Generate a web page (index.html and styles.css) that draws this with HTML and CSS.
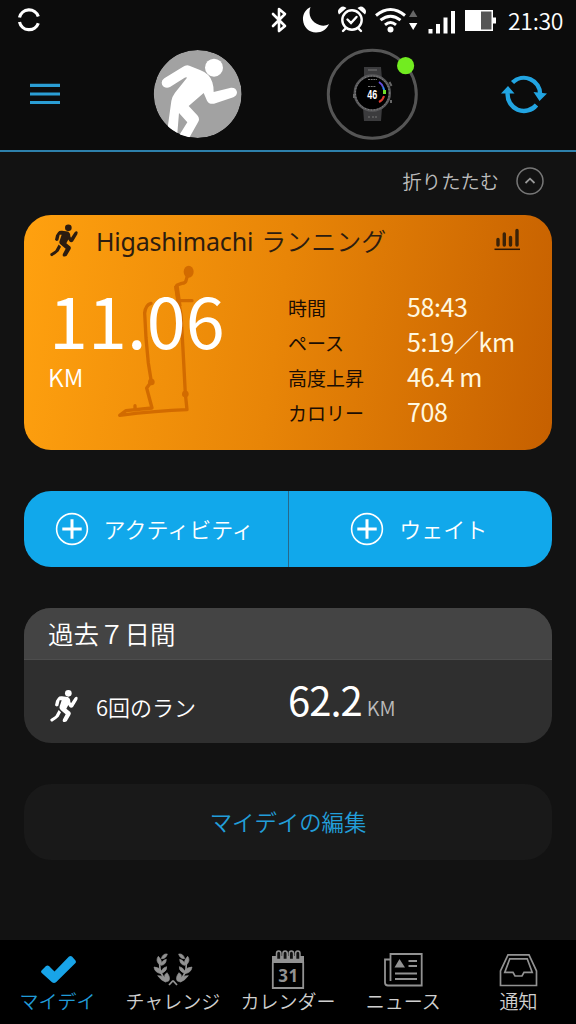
FILE: index.html
```html
<!DOCTYPE html>
<html lang="ja">
<head>
    <meta charset="UTF-8">
    <meta name="viewport" content="width=device-width, initial-scale=1.0">
    <title>マイデイ</title>
    <link rel="stylesheet" href="styles.css">
</head>
<body>
    <svg class="defs" width="0" height="0">
        <symbol id="runner" viewBox="92 42 84 98">
            <circle cx="147" cy="53" r="10" fill="currentColor"/>
            <path d="M116 66 Q120 61 128 62 L145 64 Q153 67 153 78 L155 83 L166 66 Q172 61 175 66 L174 72 L161 94 Q155 99 150 93 L147 88 L141 99 L153 109 Q156 113 153 118 L142 137 Q137 141 131 138 Q129 135 131 131 L139 116 L124 103 Q118 99 121 92 L127 74 L121 74 L117 90 Q111 95 107 89 L110 75 Z M118 103 L125 110 L118 123 Q110 131 98 138 Q92 138 93 131 L108 121 Z" fill="currentColor"/>
        </symbol>
        <symbol id="plus" viewBox="0 0 34 34">
            <circle cx="17" cy="17" r="15.4" fill="none" stroke="currentColor" stroke-width="1.6"/>
            <path d="M17 7.3v19.4M7.3 17h19.4" stroke="currentColor" stroke-width="3"/>
        </symbol>
    </svg>

    <header class="header">
        <div class="status">
            <svg class="status-ring" width="24" height="40" viewBox="17 0 24 40">
                <path d="M19.5 17.5a9.8 9.8 0 0 1 18.8-1M19.5 22a9.8 9.8 0 0 0 18.8 1.2" fill="none" stroke="#fff" stroke-width="3.2"/>
            </svg>
            <svg width="32" height="40" viewBox="264 0 32 40">
                <path d="M273 14l12 12-6 5V9l6 5-12 12" fill="none" stroke="#fff" stroke-width="2.6" stroke-linejoin="round" stroke-linecap="round"/>
            </svg>
            <svg width="38" height="40" viewBox="296 0 38 40">
                <path d="M310.500 7c-4.500 2-8 7-7.500 13 .5 7 6 12.500 13 12.500 6 0 11-3.500 13-8.500-3 2-6.500 2-9.500 1-8-2.500-12-10-9-18z" fill="#fff"/>
            </svg>
            <svg width="36" height="40" viewBox="334 0 36 40">
                <g fill="none" stroke="#fff" stroke-width="2.4" stroke-linecap="round">
                    <circle cx="352" cy="20" r="9.700"/>
                    <path d="M347.500 19.500l3.500 3.500 5.500-6M345.500 28.500l-2.500 2.500M358.500 28.500l2.500 2.500"/>
                </g>
                <path d="M339 14.500a5 5 0 0 1 7.500-6.500zM365 14.500a5 5 0 0 0-7.500-6.500z" fill="#fff"/>
            </svg>
            <svg width="52" height="40" viewBox="370 0 52 40">
                <g fill="none" stroke="#fff" stroke-width="3">
                    <path d="M376 15.500q14.500-12 29 0M380.500 20.200q10-8 20 0M385 24.800q5.500-4.500 11 0"/>
                </g>
                <circle cx="390.500" cy="29.500" r="3" fill="#fff"/>
                <path d="M409 17l4.200-7 4.200 7z" fill="#666"/>
                <path d="M409 23l4.200 7 4.200-7z" fill="#fff"/>
            </svg>
            <svg width="38" height="40" viewBox="422 0 38 40">
                <path d="M428.500 29h4v4.500h-4zM436 24h4v9.500h-4zM443.500 17.500h4v16h-4zM451 11h4v22.500h-4z" fill="#fff"/>
            </svg>
            <svg width="48" height="40" viewBox="460 0 48 40">
                <path d="M465 10h28v7.500h3v6h-3V31h-28z" fill="#fff"/>
                <path d="M481 11.500h10.500v18H481z" fill="#555"/>
            </svg>
            <span class="clock">21:30</span>
        </div>
        <div class="toolbar">
            <svg width="32" height="24" viewBox="29 82 32 24">
                <path d="M30 85.300h30M30 94h30M30 102.500h30" stroke="#2b9ed4" stroke-width="3.200"/>
            </svg>
            <svg class="avatar" width="90" height="90" viewBox="9 12 270 270">
                <clipPath id="round"><circle cx="143" cy="147" r="132"/></clipPath>
                <g clip-path="url(#round)">
                    <circle cx="143" cy="147" r="132" fill="#a2a2a2"/>
                    <circle cx="192" cy="68" r="27" fill="#fff"/>
                    <path d="M35 113Q35 105 43 100L98 66Q108 59 118 62L150 75Q180 86 187 112Q191 124 191 141L243 128Q258 127 261 141Q261 152 250 157L192 176Q178 179 171 167L161 144L116 183L142 211Q151 221 144 232L114 285L88 270L112 232L87 204L82 265L52 255L64 168Q66 155 75 143L111 98Q109 95 104 98L60 126Q50 131 41 125Q35 120 35 113Z" fill="#fff"/>
                </g>
            </svg>
            <svg class="device" width="94" height="94" viewBox="325 47 94 94">
                <circle cx="372.300" cy="94.300" r="44" fill="#0a0a0a" stroke="#555" stroke-width="3"/>
                <path d="M364 67h17l1 12h-18zM363 108h19l-1 13h-17z" fill="#3b3b3d"/>
                <path d="M368 70h9M368 117h2M372 117h2M375 117h2" stroke="#777" stroke-width="1"/>
                <circle cx="372.300" cy="93" r="17.500" fill="#000" stroke="#58585a" stroke-width="2.500"/>
                <circle cx="372.300" cy="93" r="17" fill="none" stroke="#8a8a8a" stroke-width="1" stroke-dasharray="1 2"/>
                <path d="M354 94v4M389.500 82l2 4M391 100v3" stroke="#666" stroke-width="2"/>
                <path d="M379 82q3 2 4 5" fill="none" stroke="#6350dc" stroke-width="2"/>
                <path d="M383 87q1 2 1.500 5" fill="none" stroke="#3287ea" stroke-width="2"/>
                <path d="M384.500 90v4" stroke="#71dd2a" stroke-width="3"/>
                <path d="M384 96q-1 4-5 6" fill="none" stroke="#df3b30" stroke-width="2"/>
                <path d="M368 79.500h9M368 86.500h8" stroke="#777" stroke-width="1" stroke-dasharray="2 .7"/>
                <text class="watch-value" x="372.300" y="99" text-anchor="middle" textLength="10" lengthAdjust="spacingAndGlyphs">46</text>
                <circle cx="405.600" cy="65.700" r="8.600" fill="#72ec20"/>
            </svg>
            <svg class="sync" width="48" height="42" viewBox="500 73 48 42">
                <g fill="none" stroke="#22a5e2" stroke-width="4.400">
                    <path d="M512.500 82.500a16.300 16.300 0 0 1 27.700 12"/>
                    <path d="M536.500 105a16.300 16.300 0 0 1-28.800-12"/>
                </g>
                <path d="M533.500 92l13.500 1.500-7.500 7.500zM501 93.500l7-7.500 6.500 7.500z" fill="#22a5e2"/>
            </svg>
        </div>
    </header>

    <main class="content">
        <div class="collapse">
            <span>折りたたむ</span>
            <svg width="28" height="28" viewBox="0 0 28 28">
                <circle cx="14" cy="14" r="13" fill="none" stroke="#777" stroke-width="1.500"/>
                <path d="M9.500 16l4.500-4.300 4.500 4.300" fill="none" stroke="#999" stroke-width="1.800"/>
            </svg>
        </div>

        <section class="run-card">
            <svg class="route" width="84" height="160" viewBox="288 160 252 480">
                <path d="M506 185L498 213Q497 220 485 221L472 226Q467 229 469 240L475 272L516 273M475 272L483 315L489 420L496 552L501 600Q410 603 299 617L318 603L396 595L380 535L394 516L385 460L378 385L374 310Q377 285 393 281M345 600V588" fill="none" stroke="#d26b00" stroke-width="10" stroke-linejoin="round" stroke-linecap="round"/>
                <path d="M469 228L478 290" stroke="#d26b00" stroke-width="14"/>
                <ellipse cx="506" cy="186" rx="15" ry="18" fill="#d26b00"/>
                <circle cx="394" cy="517" r="10" fill="#d26b00"/>
                <circle cx="496" cy="553" r="10" fill="#d26b00"/>
            </svg>
            <div class="run-title">
                <svg class="runner" width="28" height="33"><use href="#runner"/></svg>
                <h2><span class="place">Higashimachi</span>ランニング</h2>
                <svg class="chart" width="28" height="24" viewBox="494 229 28 24">
                    <path d="M498 246v-5.500M504.300 246v-11M510.500 246v-7.500M517 246v-14.500" stroke="#3a2208" stroke-width="3.400" stroke-linecap="round"/>
                    <path d="M494.500 250.300H520" stroke="#2b1604" stroke-width="1.500"/>
                </svg>
            </div>
            <div class="run-body">
                <div class="distance">
                    <div class="distance-value">11.06</div>
                    <div class="distance-unit">KM</div>
                </div>
                <dl class="stats">
                    <dt>時間</dt><dd>58:43</dd>
                    <dt>ペース</dt><dd>5:19／km</dd>
                    <dt>高度上昇</dt><dd>46.4 m</dd>
                    <dt>カロリー</dt><dd>708</dd>
                </dl>
            </div>
        </section>

        <div class="actions">
            <button class="action">
                <svg width="34" height="34"><use href="#plus"/></svg>
                <span>アクティビティ</span>
            </button>
            <button class="action">
                <svg width="34" height="34"><use href="#plus"/></svg>
                <span>ウェイト</span>
            </button>
        </div>

        <section class="week-card">
            <h2 class="week-title">過去７日間</h2>
            <div class="week-row">
                <svg class="runner" width="28" height="34"><use href="#runner"/></svg>
                <span class="week-label">6回のラン</span>
                <span class="week-value">62.2</span>
                <span class="week-unit">KM</span>
            </div>
        </section>

        <button class="edit">マイデイの編集</button>
    </main>

    <nav class="tabs">
        <a class="tab active">
            <svg width="40" height="40" viewBox="38 950 40 40">
                <path d="M41.500 970.500l4.500-4.500q1.500-1 3 0l5.500 5.500 14.500-15q1.500-1.200 3 0l3.500 4q1 1.500 0 2.500l-19.500 19.200q-2 1.500-4 0l-10.500-9.500q-1-1 0-2.200z" fill="#18a4e8"/>
            </svg>
            <span>マイデイ</span>
        </a>
        <a class="tab">
            <svg width="40" height="40" viewBox="9 15 120 120">
                <g id="branch">
                    <path d="M52 27Q38 25 34 41Q48 42 52 27ZM25 34Q16 46 27 58L33 59Q38 48 25 34ZM49 43Q34 47 33 61Q48 60 49 43ZM12 66Q14 83 33 86L41 82Q51 76 50 65Q40 67 34 77Q27 67 12 66ZM23 92Q33 106 46 111L56 108Q63 98 51 83Q42 88 44 98Q35 91 23 92Z" fill="#929292" stroke="#929292" stroke-width="2"/>
                    <path d="M29 56Q28 88 50 106M57 120L69 107" fill="none" stroke="#929292" stroke-width="5"/>
                </g>
                <use href="#branch" transform="translate(138 0) scale(-1 1)"/>
            </svg>
            <span>チャレンジ</span>
        </a>
        <a class="tab">
            <svg width="40" height="40" viewBox="268 950 40 40">
                <path d="M272.800 962.500V988h30.400v-26" fill="none" stroke="#929292" stroke-width="1.800"/>
                <path d="M272 956h32v7h-32z" fill="#929292"/>
                <path d="M276.500 959.500v-6q0-2.500 2.200-2.500t2.200 2.500v6zM282.900 959.500v-6q0-2.500 2.200-2.500t2.200 2.500v6zM289.200 959.500v-6q0-2.500 2.200-2.500t2.200 2.500v6zM295.600 959.500v-6q0-2.500 2.200-2.500t2.200 2.500v6z" fill="#111" stroke="#929292" stroke-width="1.500"/>
                <text class="cal-day" x="288.200" y="981.500" text-anchor="middle" textLength="20">31</text>
            </svg>
            <span>カレンダー</span>
        </a>
        <a class="tab">
            <svg width="40" height="40" viewBox="383 950 40 40">
                <g fill="none" stroke="#929292" stroke-width="1.800">
                    <path d="M390.500 981v-27h31.200v31.500H388q-3 0-3-3V959.500h5.500"/>
                    <path d="M408.500 961h8.500M408.500 966h8.500M395 973.500h22M395 979h22"/>
                </g>
                <path d="M394.500 967.500l5-8.500 5.500 8.500z" fill="#929292"/>
            </svg>
            <span>ニュース</span>
        </a>
        <a class="tab">
            <svg width="40" height="40" viewBox="498 950 40 40">
                <path d="M500.500 985.500V971l7.500-16.200h21l7.500 16.200v14.500zM504.800 972.300l5-13.500h17.400l5 13.500H524l-2 3.700h-7l-2-3.700z" fill="none" stroke="#929292" stroke-width="1.700"/>
            </svg>
            <span>通知</span>
        </a>
    </nav>
</body>
</html>
```

FILE: styles.css
```css
* {
    box-sizing: border-box;
}

body {
    margin: 0;
    height: 1024px;
    display: flex;
    flex-direction: column;
    background: #121212;
    color: #fff;
    font-family: "Noto Sans CJK JP", "Noto Sans", sans-serif;
    font-weight: 350;
    overflow: hidden;
}

svg {
    display: block;
    flex-shrink: 0;
}

.defs {
    position: absolute;
}

h2, dl, dd {
    margin: 0;
    font-weight: inherit;
}

button {
    border: 0;
    padding: 0;
    font-family: inherit;
    font-weight: inherit;
    color: inherit;
}

/* header */
.header {
    height: 152px;
    background: #0c0c0c;
    border-bottom: 2px solid #2d80ab;
}

.status {
    display: flex;
    height: 40px;
    padding-left: 17px;
}

.status-ring {
    margin-right: 223px;
}

.clock {
    font-size: 23px;
    line-height: 41px;
    letter-spacing: -0.3px;
}

.toolbar {
    display: flex;
    align-items: center;
    height: 108px;
    padding-left: 29px;
}

.avatar {
    margin-left: 92px;
}

.device {
    margin-left: 82px;
}

.sync {
    margin-left: 81px;
}

.watch-value {
    font: bold 12px "Liberation Sans", sans-serif;
    fill: #fff;
}

/* cards */
.content {
    flex: 1;
    padding: 0 24px;
}

.collapse {
    display: flex;
    justify-content: flex-end;
    align-items: center;
    gap: 17px;
    height: 63px;
    padding: 0 8px 5px 0;
    font-size: 19.3px;
    color: #bdbdbd;
}

.run-card {
    position: relative;
    height: 235px;
    padding: 7px 24px 0;
    border-radius: 27px;
    background: linear-gradient(98deg, #ffa10f, #e88507 48%, #c66000);
}

.route {
    position: absolute;
    left: 92px;
    top: 48px;
}

.run-title {
    position: relative;
    display: flex;
    align-items: center;
    height: 36px;
    color: #2c1c10;
}

.run-title .runner {
    margin-left: 2px;
}

.run-title h2 {
    flex: 1;
    margin-left: 18px;
    font-size: 25px;
    line-height: 36px;
}

.place {
    margin-right: 8px;
    font-family: "Noto Sans", sans-serif;
    font-weight: 400;
    letter-spacing: -0.2px;
}

.chart {
    margin-right: 6px;
}

.run-body {
    position: relative;
    display: flex;
}

.distance {
    width: 240px;
    padding: 22px 0 0 1px;
}

.distance-value {
    font-size: 70px;
    font-weight: 400;
    line-height: 78px;
    letter-spacing: 0.2px;
}

.distance-unit {
    margin-left: -1px;
    padding-top: 5px;
    font-size: 24.5px;
    line-height: 28px;
}

.stats {
    display: grid;
    grid-template-columns: 119px 1fr;
    grid-auto-rows: 35px;
    align-items: center;
    padding-top: 31px;
    white-space: nowrap;
}

.stats dt {
    font-size: 19px;
    font-weight: 400;
    line-height: 35px;
    color: #1b0d03;
    padding-top: 2px;
}

.stats dd {
    font-size: 25px;
    font-weight: 400;
    line-height: 35px;
    letter-spacing: -0.4px;
    color: #fff8e0;
}

.actions {
    display: flex;
    height: 76px;
    margin-top: 41px;
    border-radius: 27px;
    overflow: hidden;
}

.action {
    flex: 1;
    display: flex;
    justify-content: center;
    align-items: center;
    gap: 15px;
    padding: 0 3px 0 0;
    background: #11a8eb;
    font-size: 22px;
}

.action span {
    padding-bottom: 3px;
}

.action + .action {
    border-left: 1px solid #286889;
}

.week-card {
    height: 135px;
    margin-top: 41px;
    border-radius: 27px;
    background: #2f2f2f;
    overflow: hidden;
}

.week-title {
    height: 52px;
    padding-left: 24px;
    background: #444;
    border-bottom: 1px solid #4d4d4d;
    font-size: 25.5px;
    line-height: 50px;
}

.week-row {
    display: flex;
    height: 83px;
    padding-left: 26px;
    align-items: baseline;
}

.week-row .runner {
    align-self: center;
    margin-top: 8px;
}

.week-label {
    width: 192px;
    margin-left: 18px;
    font-size: 22px;
}

.week-value {
    font-size: 40px;
    font-weight: 400;
    line-height: 79px;
    letter-spacing: -1px;
}

.week-unit {
    margin-left: 5px;
    font-size: 20px;
    color: #bbb;
}

.edit {
    display: block;
    width: 100%;
    height: 76px;
    margin-top: 41px;
    padding-bottom: 2px;
    border-radius: 27px;
    background: #191919;
    color: #229ed9;
    font-size: 22.4px;
}

/* bottom tabs */
.tabs {
    display: grid;
    grid-template-columns: repeat(5, 1fr);
    height: 84px;
    background: #000;
}

.tab {
    display: flex;
    flex-direction: column;
    align-items: center;
    padding-top: 10px;
    font-size: 19px;
    line-height: 22px;
    color: #d0d0d0;
    white-space: nowrap;
}

.tab.active {
    color: #209bd8;
}

.cal-day {
    font: bold 17px "Noto Sans", sans-serif;
    fill: #929292;
}
```
